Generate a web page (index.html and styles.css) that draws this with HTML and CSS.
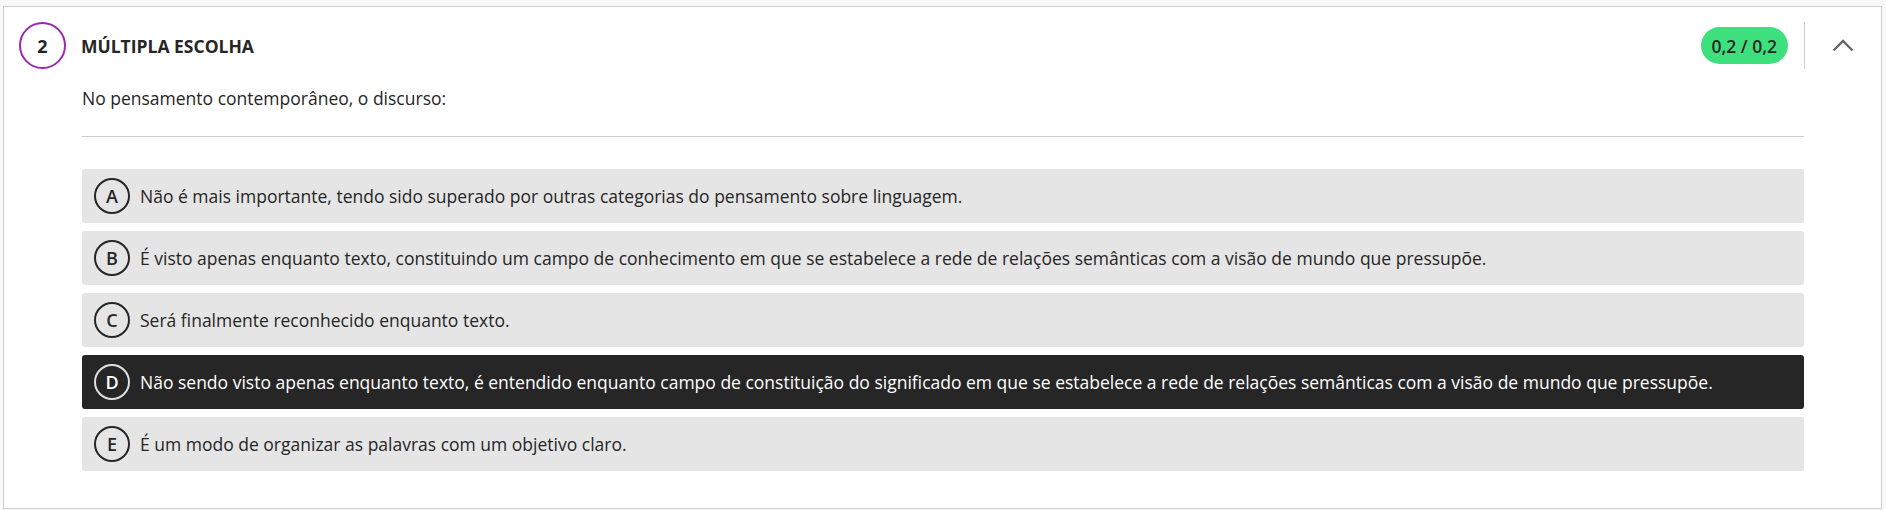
FILE: index.html
```html
<!DOCTYPE html>
<html lang="pt-BR">
<head>
    <meta charset="UTF-8">
    <meta name="viewport" content="width=device-width, initial-scale=1.0">
    <title>Questão 2 - Múltipla escolha</title>
    <link rel="stylesheet" href="styles.css">
</head>
<body>
    <section class="question">
        <header class="question-header">
            <span class="question-number">2</span>
            <h2 class="question-type">MÚLTIPLA ESCOLHA</h2>
            <span class="score">0,2 / 0,2</span>
            <button class="toggle" type="button" aria-label="Recolher">
                <svg width="22" height="13" viewBox="0 0 22 13">
                    <path d="M1.5 11.5 L11 2 L20.5 11.5" fill="none" stroke="#666" stroke-width="2.4"/>
                </svg>
            </button>
        </header>

        <div class="question-body">
            <p class="statement">No pensamento contemporâneo, o discurso:</p>
            <hr class="divider">

            <ul class="options">
                <li class="option"><span class="letter">A</span>Não é mais importante, tendo sido superado por outras categorias do pensamento sobre linguagem.</li>
                <li class="option"><span class="letter">B</span>É visto apenas enquanto texto, constituindo um campo de conhecimento em que se estabelece a rede de relações semânticas com a visão de mundo que pressupõe.</li>
                <li class="option"><span class="letter">C</span>Será finalmente reconhecido enquanto texto.</li>
                <li class="option selected"><span class="letter">D</span>Não sendo visto apenas enquanto texto, é entendido enquanto campo de constituição do significado em que se estabelece a rede de relações semânticas com a visão de mundo que pressupõe.</li>
                <li class="option"><span class="letter">E</span>É um modo de organizar as palavras com um objetivo claro.</li>
            </ul>
        </div>
    </section>
</body>
</html>
```

FILE: styles.css
```css
body {
    font-family: "Open Sans", "Noto Sans", Arial, sans-serif;
    background-color: #f8f8f8;
    color: #262626;
    margin: 0;
    padding: 6px 4px 3px 3px;
}
.question {
    background: #fff;
    border: 1px solid #cdcdcd;
    padding: 15px 0 37px 0;
}
.question-header {
    display: flex;
    align-items: center;
    height: 47px;
    padding-left: 15px;
}
.question-number {
    width: 43px;
    height: 43px;
    border: 2px solid #9c27b0;
    border-radius: 50%;
    display: flex;
    align-items: center;
    justify-content: center;
    font-size: 18px;
    font-weight: 700;
}
.question-type {
    flex: 1;
    margin: 0 0 0 15px;
    font-size: 17.5px;
    font-weight: 700;
}
.score {
    background: #3ee07d;
    border-radius: 19px;
    height: 37px;
    padding: 0 11px;
    display: flex;
    align-items: center;
    font-size: 17.5px;
    font-weight: 600;
    margin-right: 16px;
}
.toggle {
    width: 77px;
    height: 47px;
    border: none;
    border-left: 1px solid #cdcdcd;
    background: none;
    padding: 0;
    display: flex;
    align-items: center;
    justify-content: center;
    cursor: pointer;
}
.question-body {
    padding: 0 77px 0 78px;
}
.statement {
    margin: 16px 0 0 0;
    font-size: 17.5px;
    line-height: 27px;
}
.divider {
    border: none;
    border-top: 1px solid #cdcdcd;
    margin: 24px 0 32px 0;
}
.options {
    list-style: none;
    margin: 0;
    padding: 0;
    display: flex;
    flex-direction: column;
    gap: 8px;
}
.option {
    background: #e5e5e5;
    border-radius: 3px;
    height: 54px;
    padding: 0 12px;
    display: flex;
    align-items: center;
    font-size: 17.5px;
}
.option.selected {
    background: #262626;
    color: #fff;
}
.letter {
    width: 32px;
    height: 32px;
    border: 2px solid #262626;
    border-radius: 50%;
    display: flex;
    align-items: center;
    justify-content: center;
    font-size: 18px;
    font-weight: 600;
    margin-right: 10px;
    flex-shrink: 0;
}
.option.selected .letter {
    border-color: #e0e0e0;
}
```
